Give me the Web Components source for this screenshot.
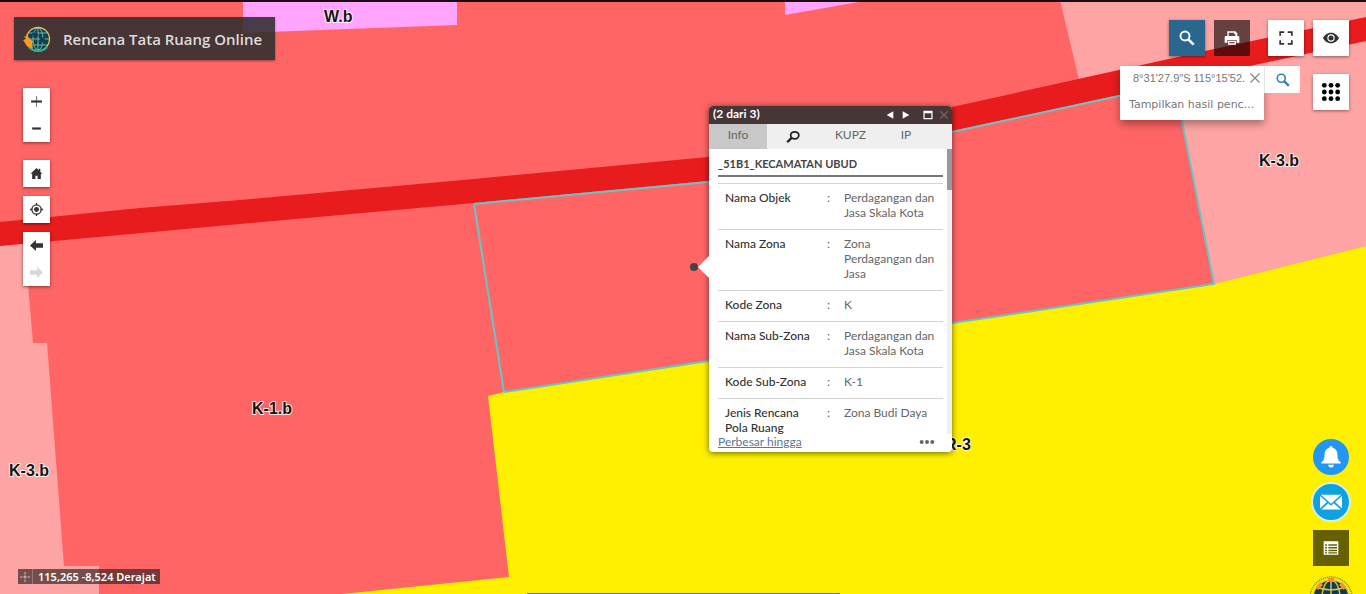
<!DOCTYPE html>
<html lang="id">
<head>
<meta charset="utf-8">
<title>Rencana Tata Ruang Online</title>
<style>
  body { margin: 0; font-family: "Open Sans", sans-serif; background: #ff6565; }
</style>
</head>
<body>
<rtr-app></rtr-app>

<script>
const ICONS = {
  plus: '<path d="M11 2h2v20h-2z" opacity=".65"/><path d="M2 10h20v4H2z"/>',
  minus: '<path d="M4 10h16v4H4z"/>',
  home: '<path d="M12 2 1 12.500h3V22h6v-6h4v6h6v-9.500h3L19 8.700V3h-3v3z"/>',
  locate: '<g fill="none" stroke="currentColor" stroke-width="2.400"><circle cx="12" cy="12" r="8.500"/><path d="M12 0v4M12 20v4M0 12h4M20 12h4"/></g><circle cx="12" cy="12" r="4.500"/>',
  back: '<path d="M0 12 11 2v6h13v8H11v6z"/>',
  forward: '<path d="M24 12 13 2v6H0v8h13v6z"/>',
  search: '<g fill="none" stroke="currentColor"><circle cx="9" cy="9" r="6.800" stroke-width="2.800"/><path d="m14 14 8 8" stroke-width="4"/></g>',
  print: '<path d="M5 2h12l3 3v4H5zM7 4v5h10V6h-2V4z" fill-rule="evenodd"/><path d="M3 9h18a2 2 0 0 1 2 2v8h-4v-4H5v4H1v-8a2 2 0 0 1 2-2z"/><path d="M6 16h12v6H6zM8 18v2h8v-2z" fill-rule="evenodd"/>',
  full: '<path d="M2 8V2h7M15 2h7v6M22 16v6h-7M9 22H2v-6" fill="none" stroke="currentColor" stroke-width="3"/>',
  eye: '<path d="M12 4C6 4 2 8 0 12c2 4 6 8 12 8s10-4 12-8c-2-4-6-8-12-8zm0 2.500a5.500 5.500 0 1 1 0 11 5.500 5.500 0 0 1 0-11z" fill-rule="evenodd"/><circle cx="12" cy="12" r="3.800"/>',
  apps: '<g><circle cx="4" cy="4" r="2.900"/><circle cx="12" cy="4" r="2.900"/><circle cx="20" cy="4" r="2.900"/><circle cx="4" cy="12" r="2.900"/><circle cx="12" cy="12" r="2.900"/><circle cx="20" cy="12" r="2.900"/><circle cx="4" cy="20" r="2.900"/><circle cx="12" cy="20" r="2.900"/><circle cx="20" cy="20" r="2.900"/></g>',
  close: '<path d="m3 3 18 18M21 3 3 21" fill="none" stroke="currentColor" stroke-width="2.600"/>',
  bell: '<path d="M12 0c-1.200 0-1.800.8-1.800 1.800C6.500 2.700 5 5.500 5 9c0 5-1 7-3.500 8.500V19h21v-1.500C20 16 19 14 19 9c0-3.500-1.500-6.300-5.200-7.200C13.800.8 13.200 0 12 0zM9 20.500a3 3 0 0 0 6 0z"/>',
  mail: '<path d="M1 4h22L12 14z"/><path d="M0 5.500 7.500 12 0 19zM24 5.500 16.500 12 24 19zM9 13.300l3 2.700 3-2.700 7.500 7H1.500z"/>',
  list: '<path d="M1 2h22v20H1zM3 6.500v2.200h3V6.500zm5 0v2.200h13V6.500zm-5 4v2.200h3v-2.200zm5 0v2.200h13v-2.200zm-5 4v2.200h3v-2.200zm5 0v2.200h13v-2.200zm-5 3.700v2h3v-2zm5 0v2h13v-2z" fill-rule="evenodd"/>',
  target: '<path d="M12 0v6M12 18v6M0 12h6M18 12h6M12 8v8M8 12h8" fill="none" stroke="currentColor" stroke-width="2"/>',
  prev: '<path d="M20 3v18L4 12z"/>',
  next: '<path d="M4 3v18l16-9z"/>',
  max: '<path d="M1 2h22v20H1zM4 8v11h16V8z" fill-rule="evenodd"/>',
  lens: '<g fill="none" stroke="currentColor"><ellipse cx="15" cy="9" rx="7" ry="6" stroke-width="3"/><path d="m10 13-8 8" stroke-width="4"/></g>',
  more: '<circle cx="4" cy="12" r="3"/><circle cx="12" cy="12" r="3"/><circle cx="20" cy="12" r="3"/>'
};

const define = (name, html, setup) => {
  const template = document.createElement('template');
  template.innerHTML = html;
  customElements.define(name, class extends HTMLElement {
    constructor() {
      super();
      this.attachShadow({ mode: 'open' }).append(template.content.cloneNode(true));
    }
    connectedCallback() { if (setup) setup(this, this.shadowRoot); }
  });
};

define('rtr-icon', `
  <style>
    :host { display: block; width: var(--icon, 16px); height: var(--icon, 16px); }
    svg { display: block; width: 100%; height: 100%; fill: currentColor; }
  </style>
  <svg viewBox="0 0 24 24" aria-hidden="true"></svg>`,
  (el, root) => { root.querySelector('svg').innerHTML = ICONS[el.getAttribute('name')] || ''; });

define('rtr-button', `
  <style>
    :host { display: block; width: 36px; height: 36px; background: #fff; color: #333; box-shadow: 0 1px 3px rgba(0,0,0,.45); }
    :host([small]) { width: 27px; height: 27px; --icon: 13px; }
    :host([flat]) { box-shadow: none; }
    :host([active]) { background: #29678f; color: #fff; }
    :host([dim]) { background: rgba(0,0,0,.6); color: #fff; box-shadow: none; }
    :host([off]) { color: #d8d8d8; }
    :host([round]) { border-radius: 50%; color: #fff; box-shadow: none; }
    button { display: grid; place-items: center; width: 100%; height: 100%; margin: 0; padding: 0; border: 0; background: none; color: inherit; cursor: pointer; }
  </style>
  <button type="button"></button>`,
  (el, root) => {
    const icon = document.createElement('rtr-icon');
    icon.setAttribute('name', el.getAttribute('icon'));
    const button = root.querySelector('button');
    button.replaceChildren(icon);
    button.setAttribute('aria-label', el.getAttribute('label'));
    button.disabled = el.hasAttribute('off');
  });

define('rtr-tools', `
  <style>
    :host { display: flex; flex-direction: column; width: 27px; background: #fff; box-shadow: 0 1px 3px rgba(0,0,0,.5); }
  </style>
  <slot></slot>`);

define('rtr-emblem', `
  <style>:host { display: block; width: 28px; height: 28px; } svg { display: block; width: 100%; height: 100%; }</style>
  <svg viewBox="0 0 28 28" aria-hidden="true">
    <circle cx="15" cy="14" r="11" fill="#123f52"/>
    <g fill="none" stroke="#64b9a4" stroke-width="1"><ellipse cx="15" cy="14" rx="5" ry="11"/><path d="M15 3v22M4 14h22M6 8h18M6 20h18"/></g>
    <path d="M9 8l5-1 1 4-4 2zM17 12l5 1-1 4-4 1z" fill="#123f52"/>
    <circle cx="15" cy="14" r="11.500" fill="none" stroke="#e0c45a" stroke-width="1.300"/>
    <path d="M6 22a12 12 0 0 0 18 0" fill="none" stroke="#32a894" stroke-width="2"/>
    <path d="M3 9c3 1 2 4 4 5l3 2-1 4 1 3c-4 0-7-2-8-5l-2-3 3-1-2-3 3 1z" fill="#f59a22"/>
  </svg>`);

define('rtr-title', `
  <style>
    :host { display: flex; align-items: center; gap: 12px; height: 43px; padding: 0 13px 0 9px; background: rgba(45,45,45,.88); color: #ddd; box-shadow: 0 1px 2px rgba(0,0,0,.4); }
    h1 { margin: 0; font: 600 15px/20px "Open Sans", sans-serif; white-space: nowrap; }
  </style>
  <rtr-emblem></rtr-emblem><h1><slot></slot></h1>`);

define('rtr-coordinates', `
  <style>
    :host { display: flex; align-items: center; height: 15px; background: rgba(50,35,35,.68); color: #fff; font: 600 11px/15px "Noto Sans", sans-serif; }
    .mark { display: grid; place-items: center; width: 14px; height: 15px; border-right: 1px solid rgba(255,255,255,.3); --icon: 10px; opacity: .8; }
    output { padding: 0 4px 0 5px; white-space: nowrap; }
  </style>
  <span class="mark"><rtr-icon name="target"></rtr-icon></span><output><slot></slot></output>`);

define('rtr-search', `
  <style>
    :host { display: flex; align-items: flex-start; }
    .panel { width: 144px; background: #fff; box-shadow: 0 4px 8px rgba(0,0,0,.35); }
    .field { display: flex; align-items: center; height: 23px; padding-left: 13px; }
    input { flex: 1; min-width: 0; height: 20px; margin: 0; padding: 0; border: 0; outline: 0; background: none; color: #777; font: 11px/20px "Liberation Sans", sans-serif; }
    .clear { --icon: 12px; width: 18px; height: 23px; color: #888; }
    .suggestion { display: block; width: 100%; height: 31px; margin: 0; padding: 0 9px; border: 0; background: none; color: #777; font: 11px/30px "DejaVu Sans", sans-serif; text-align: left; white-space: nowrap; }
    .go { height: 27px; color: #3583b8; --icon: 14px; border-left: 1px solid #e4e4e4; box-sizing: border-box; }
  </style>
  <form class="panel" onsubmit="return false">
    <div class="field">
      <input type="text" aria-label="Cari lokasi" value="8°31'27.9&quot;S 115°15'52.">
      <rtr-button class="clear" flat icon="close" label="Hapus"></rtr-button>
    </div>
    <button class="suggestion" type="button">Tampilkan hasil penc...</button>
  </form>
  <rtr-button class="go" flat icon="search" label="Cari"></rtr-button>`);

define('rtr-map', `
  <style>
    :host { display: block; overflow: hidden; }
    svg { display: block; width: 100%; height: 100%; }
    text { font: bold 16px "Liberation Sans", sans-serif; fill: #141414; stroke: #fff; stroke-width: 2px; stroke-opacity: .85; stroke-linejoin: round; paint-order: stroke; }
  </style>
  <svg viewBox="0 0 1366 594" preserveAspectRatio="xMinYMin slice" role="img" aria-label="Peta pola ruang">
    <path fill="#ff6565" d="M0 0h1366v594H0z"/>
    <g fill="#ffa4a4">
      <path d="M0 240 26 238 28 285 33 343H47L64 566H99V594H0z"/>
      <path d="M1060 0 1080 84 1174 82 1182 121 1214 284 1366 246V0z"/>
    </g>
    <path fill="#ffa4ff" d="M243 0H457V25L243 33zM785 0V15L870 0z"/>
    <path fill="#fff000" d="M1366 246 1214 284 952 323 708 361 504 392 488 396 509 577 342 594H1366z"/>
    <path fill="#e81c1c" d="M0 222 140 208 240 200 474 179 708 157 952 107 1119 70 1205 51 1366 17V41L1250 66 1119 95 952 131 708 181 474 203 240 224 0 246z"/>
    <path fill="none" stroke="#67c5c5" stroke-width="2" d="M474 204 708 182 952 132 1119 96 1174 83 1182 121 1214 284 952 323 708 361 504 392z"/>
    <circle cx="694" cy="267" r="4" fill="#444"/>
    <text x="324" y="22">W.b</text>
    <text x="252" y="414">K-1.b</text>
    <text x="9" y="476">K-3.b</text>
    <text x="1259" y="166">K-3.b</text>
    <text x="945" y="450">R-3</text>
    <path fill="#1c0c12" d="M0 0h1366v2H0z"/>
    <path fill="#736b14" d="M527 593h313v1H527z"/>
  </svg>`);

define('rtr-popup', `
  <style>
    :host { display: flex; flex-direction: column; width: 243px; height: 346px; border-radius: 4px; background: #fff; color: #444; font: 12px/15px Lato, sans-serif; box-shadow: 0 1px 6px rgba(0,0,0,.6); }
    .pointer { position: absolute; right: 100%; top: 150px; border: 11px solid transparent; border-left: 0; border-right-color: #fff; }
    header { display: flex; align-items: center; gap: 2px; height: 18px; padding: 0 1px 0 4px; border-radius: 4px 4px 0 0; background: #463636; color: #fff; }
    header strong { flex: 1; font-weight: 700; padding-bottom: 3px; }
    header rtr-button { width: 14px; height: 16px; background: none; color: #fff; --icon: 10px; }
    header .faint { color: #776868; }
    header .gap { margin-left: 6px; }
    nav { display: grid; grid-template-columns: 58px 51px 65px 46px 1fr; height: 25px; background: #efefef; }
    nav button { display: grid; place-items: center; margin: 0; padding: 0 0 4px; border: 0; background: none; color: #666; font: 12px/15px Lato, sans-serif; --icon: 14px; }
    nav button[aria-selected=true] { background: #c8c8c8; }
    nav button.lens { color: #222; padding: 0; }
    .body { flex: 1; min-height: 0; display: flex; }
    .content { flex: 1; overflow: hidden; padding-left: 9px; }
    .bar { width: 5px; margin-left: 4px; background: #f0f0f0; }
    .bar i { display: block; height: 41px; background: #999; }
    h2 { margin: 0 0 6px; padding: 7px 0 4px; border-bottom: 2px solid #777; color: #444; font: 700 11px/15px Lato, sans-serif; }
    table { width: 100%; border-collapse: collapse; table-layout: fixed; }
    tr { border-top: 1px solid #d4d4d4; }
    th, td { padding: 6px 0 9px; vertical-align: top; text-align: left; font-weight: 400; color: #666; }
    th { width: 92px; padding-left: 7px; padding-right: 10px; font-weight: 500; color: #333; }
    td.c { width: 17px; }
    td:last-child { padding-right: 8px; }
    footer { display: flex; align-items: flex-start; justify-content: space-between; height: 18px; padding: 0 17px 0 9px; }
    footer a { color: #5d7793; text-decoration: underline; }
    footer rtr-button { width: 16px; height: 16px; color: #666; background: none; }
  </style>
  <span class="pointer"></span>
  <header>
    <strong>(2 dari 3)</strong>
    <rtr-button flat icon="prev" label="Sebelumnya"></rtr-button>
    <rtr-button flat icon="next" label="Berikutnya"></rtr-button>
    <rtr-button class="gap" flat icon="max" label="Perbesar"></rtr-button>
    <rtr-button class="faint" flat icon="close" label="Tutup"></rtr-button>
  </header>
  <nav role="tablist">
    <button role="tab" aria-selected="true">Info</button>
    <button role="tab" class="lens" aria-label="Cari"><rtr-icon name="lens"></rtr-icon></button>
    <button role="tab">KUPZ</button>
    <button role="tab">IP</button>
  </nav>
  <div class="body">
    <div class="content">
      <h2>_51B1_KECAMATAN UBUD</h2>
      <table>
        <tr><th scope="row">Nama Objek</th><td class="c">:</td><td>Perdagangan dan Jasa Skala Kota</td></tr>
        <tr><th scope="row">Nama Zona</th><td class="c">:</td><td>Zona Perdagangan dan Jasa</td></tr>
        <tr><th scope="row">Kode Zona</th><td class="c">:</td><td>K</td></tr>
        <tr><th scope="row">Nama Sub-Zona</th><td class="c">:</td><td>Perdagangan dan Jasa Skala Kota</td></tr>
        <tr><th scope="row">Kode Sub-Zona</th><td class="c">:</td><td>K-1</td></tr>
        <tr><th scope="row">Jenis Rencana Pola Ruang</th><td class="c">:</td><td>Zona Budi Daya</td></tr>
      </table>
    </div>
    <div class="bar"><i></i></div>
  </div>
  <footer><a href="#">Perbesar hingga</a><rtr-button flat icon="more" label="Lainnya"></rtr-button></footer>`);

define('rtr-badge', `
  <style>:host { display: block; width: 48px; height: 20px; overflow: hidden; } svg { display: block; width: 48px; height: 48px; }</style>
  <svg viewBox="0 0 48 48" aria-hidden="true">
    <circle cx="24" cy="24" r="21" fill="none" stroke="#8a7a14" stroke-width="1.500" stroke-dasharray="1 1"/>
    <circle cx="24" cy="24" r="18" fill="#123a52"/>
    <g fill="none" stroke="#d9c14a" stroke-width="1.500"><circle cx="24" cy="24" r="18"/><ellipse cx="24" cy="24" rx="9" ry="18"/><path d="M24 6v36M9 13q15 6 30 0M6 24h36"/></g>
    <path d="M9 13l4-5 3 3-5 5zM39 13l-4-5-3 3 5 5zM21 4h6v4h-6z" fill="#f0952a"/>
  </svg>`);

define('rtr-app', `
  <style>
    :host { display: grid; grid-template: minmax(0, 100vh) / minmax(0, 1fr); position: relative; overflow: hidden; }
    rtr-map, .overlay { grid-area: 1 / 1; }
    rtr-popup { position: absolute; left: 709px; top: 106px; }
    .overlay { position: relative; display: flex; justify-content: space-between; }
    .left { display: flex; flex-direction: column; align-items: flex-start; padding: 17px 0 10px 14px; }
    rtr-title { margin-bottom: 28px; }
    .tools { display: flex; flex-direction: column; gap: 9px; margin-left: 9px; }
    .zoom { margin-bottom: 9px; }
    rtr-coordinates { margin: auto 0 0 4px; }
    .right { display: flex; flex-direction: column; align-items: flex-end; padding: 20px 17px 0 0; }
    .row { display: flex; gap: 9px; }
    .gap { margin-left: 9px; --icon: 14px; }
    .find { display: flex; align-items: flex-start; gap: 13px; margin-top: 10px; }
    .find > rtr-button { margin-top: 8px; --icon: 20px; color: #000; }
    .dock { display: flex; flex-direction: column; align-items: center; width: 36px; gap: 8px; margin-top: auto; }
    .bell { background: #2196f3; --icon: 22px; }
    .mail { background: #0ea2df; --icon: 22px; border: 2px solid #dceee0; margin-top: -1px; }
  </style>
  <rtr-map></rtr-map>
  <rtr-popup></rtr-popup>
  <div class="overlay">
    <div class="left">
      <rtr-title>Rencana Tata Ruang Online</rtr-title>
      <div class="tools">
        <rtr-tools class="zoom"><rtr-button small flat icon="plus" label="Perbesar"></rtr-button><rtr-button small flat icon="minus" label="Perkecil"></rtr-button></rtr-tools>
        <rtr-tools><rtr-button small flat icon="home" label="Beranda"></rtr-button></rtr-tools>
        <rtr-tools><rtr-button small flat icon="locate" label="Lokasi saya"></rtr-button></rtr-tools>
        <rtr-tools><rtr-button small flat icon="back" label="Mundur"></rtr-button><rtr-button small flat off icon="forward" label="Maju"></rtr-button></rtr-tools>
      </div>
      <rtr-coordinates>115,265 -8,524 Derajat</rtr-coordinates>
    </div>
    <div class="right">
      <div class="row">
        <rtr-button active icon="search" label="Cari"></rtr-button>
        <rtr-button dim icon="print" label="Cetak"></rtr-button>
        <rtr-button class="gap" icon="full" label="Layar penuh"></rtr-button>
        <rtr-button icon="eye" label="Tampilan"></rtr-button>
      </div>
      <div class="find">
        <rtr-search></rtr-search>
        <rtr-button icon="apps" label="Aplikasi"></rtr-button>
      </div>
      <div class="dock">
        <rtr-button class="bell" round icon="bell" label="Notifikasi"></rtr-button>
        <rtr-button class="mail" round icon="mail" label="Pesan"></rtr-button>
        <rtr-button dim icon="list" label="Tabel atribut"></rtr-button>
        <rtr-badge></rtr-badge>
      </div>
    </div>
  </div>`);
</script>
</body>
</html>
